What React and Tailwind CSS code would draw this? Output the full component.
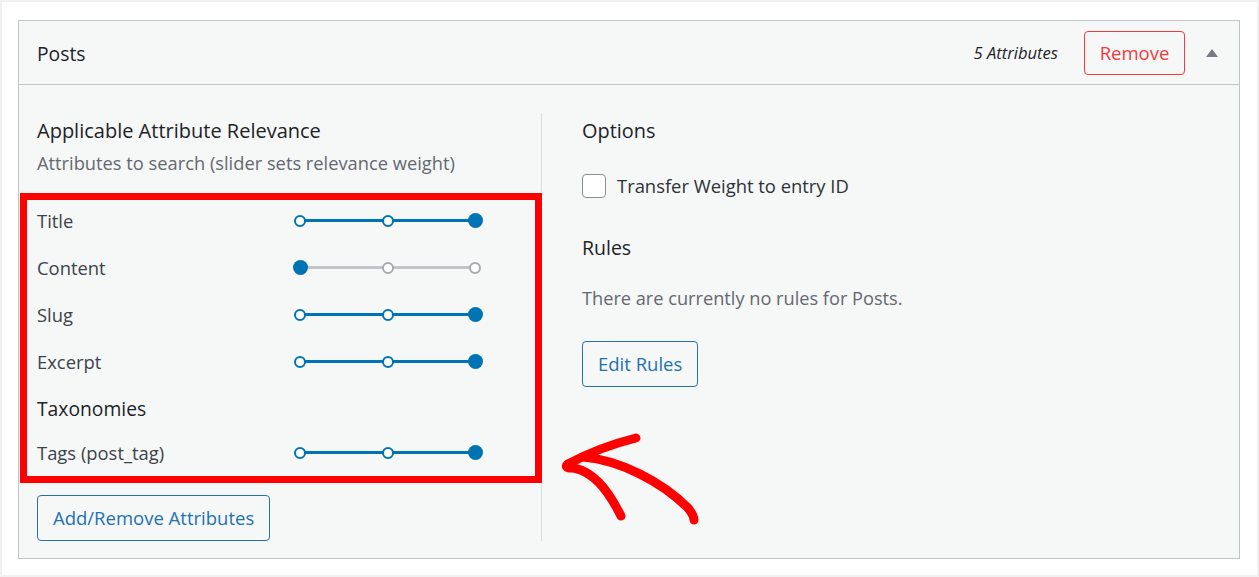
import React from "react";

const rows = [
  { label: "Title", value: 2 },
  { label: "Content", value: 0 },
  { label: "Slug", value: 2 },
  { label: "Excerpt", value: 2 },
];

function Slider({ value }) {
  const stops = [0, 1, 2];
  const active = value > 0;
  return (
    <div className="relative w-[190px] h-[16px]">
      <div className="absolute left-[7px] right-[7px] top-[6.5px] h-[3px] bg-[#c3c4c7]" />
      {active && (
        <div
          className="absolute left-[7px] top-[6.5px] h-[3px] bg-[#0073b4]"
          style={{ width: `${(value / 2) * 175}px` }}
        />
      )}
      {stops.map((s) => {
        const left = 7 + s * 87.5;
        if (s === value) {
          return (
            <div
              key={s}
              className="absolute top-[0.5px] w-[15px] h-[15px] rounded-full bg-[#0073b4]"
              style={{ left: `${left - 7.5}px` }}
            />
          );
        }
        const on = s < value;
        return (
          <div
            key={s}
            className={
              on
                ? "absolute top-[2px] w-[12px] h-[12px] rounded-full bg-white border-[2.5px] border-[#0073b4]"
                : "absolute top-[2px] w-[12px] h-[12px] rounded-full bg-white border-[2.5px] border-[#a7aaad]"
            }
            style={{ left: `${left - 6}px` }}
          />
        );
      })}
    </div>
  );
}

function Row({ label, value }) {
  return (
    <div className="flex items-center h-[47px]">
      <div className="w-[256px] text-[18.4px] leading-[24px] text-[#3c434a]">{label}</div>
      <Slider value={value} />
    </div>
  );
}

export default function App() {
  return (
    <div
      className="relative w-[1259px] h-[577px] bg-white border-2 border-[#f0f0f1] pt-[18px] pl-[16px]"
      style={{ fontFamily: '"Open Sans", "Noto Sans", sans-serif' }}
    >
      <div className="w-[1222px] h-[539px] bg-[#f6f7f7] border border-[#c3c4c7] flex flex-col">
        {/* header */}
        <div className="h-[64px] shrink-0 border-b border-[#c3c4c7] flex items-center pl-[18px] pr-[21px]">
          <h2 className="text-[19.3px] leading-[24px] mt-[2px] text-[#1d2327] flex-1">Posts</h2>
          <span className="italic text-[16.6px] leading-[24px] text-[#1d2327] mr-[26px]">5 Attributes</span>
          <button className="h-[44px] w-[101px] rounded-[4px] border border-[#f03c3c] text-[#f03c3c] text-[18.5px] leading-[24px] bg-transparent">
            Remove
          </button>
          <div className="ml-[21px] w-0 h-0 border-l-[6px] border-r-[6px] border-b-[8px] border-l-transparent border-r-transparent border-b-[#787c82]" />
        </div>

        {/* body */}
        <div className="flex pt-[28px] pl-[18px]">
          <div className="w-[505px] border-r border-[#dcdcde] flex flex-col">
            <h3 className="text-[20px] text-[#1d2327] leading-[24px] mt-[6px]">
              Applicable Attribute Relevance
            </h3>
            <p className="text-[18.3px] text-[#646970] leading-[24px] mt-[8px]">
              Attributes to search (slider sets relevance weight)
            </p>
            <div className="mt-[22px]">
              {rows.map((r) => (
                <Row key={r.label} label={r.label} value={r.value} />
              ))}
              <div className="h-[44px] flex items-center pt-[4px] text-[19.3px] leading-[24px] text-[#1d2327]">Taxonomies</div>
              <Row label="Tags (post_tag)" value={2} />
            </div>
            <button className="mt-[19px] self-start h-[46px] px-[15px] rounded-[4px] border border-[#2271b1] text-[#2271b1] text-[18.5px] leading-[24px] bg-[#f6f7f7]">
              Add/Remove Attributes
            </button>
          </div>

          <div className="pl-[40px] flex flex-col items-start">
            <h3 className="text-[19.9px] text-[#1d2327] leading-[24px] mt-[6px]">Options</h3>
            <label className="flex items-center mt-[31px]">
              <span className="w-[24px] h-[24px] rounded-[4px] border border-[#8c8f94] bg-white" />
              <span className="ml-[11px] text-[18.4px] leading-[24px] text-[#2c3338]">Transfer Weight to entry ID</span>
            </label>
            <h3 className="text-[19.5px] text-[#1d2327] leading-[24px] mt-[38px]">Rules</h3>
            <p className="text-[18.2px] text-[#646970] leading-[24px] mt-[26px]">
              There are currently no rules for Posts.
            </p>
            <button className="mt-[31px] h-[46px] px-[15px] rounded-[4px] border border-[#2271b1] text-[#2271b1] text-[18.5px] leading-[24px]">
              Edit Rules
            </button>
          </div>
        </div>
      </div>

      {/* annotation overlay */}
      <div className="absolute left-[18px] top-[191px] w-[522px] h-[290px] border-[7px] border-[#ff0000] pointer-events-none" />
      <svg
        className="absolute left-[-2px] top-[-2px] pointer-events-none"
        width="1259"
        height="577"
        viewBox="0 0 1259 577"
      >
        <g fill="none" stroke="#ff0000" strokeWidth="9" strokeLinecap="round" strokeLinejoin="round">
          <path d="M636 438 C612 444 590 452 568 464 C565 466 566 468 572 468" />
          <path d="M574 468 C592 472 606 486 621 516" />
          <path d="M583 457 C620 460 662 482 688 508 C693 514 694 518 694 520" />
        </g>
      </svg>
    </div>
  );
}
